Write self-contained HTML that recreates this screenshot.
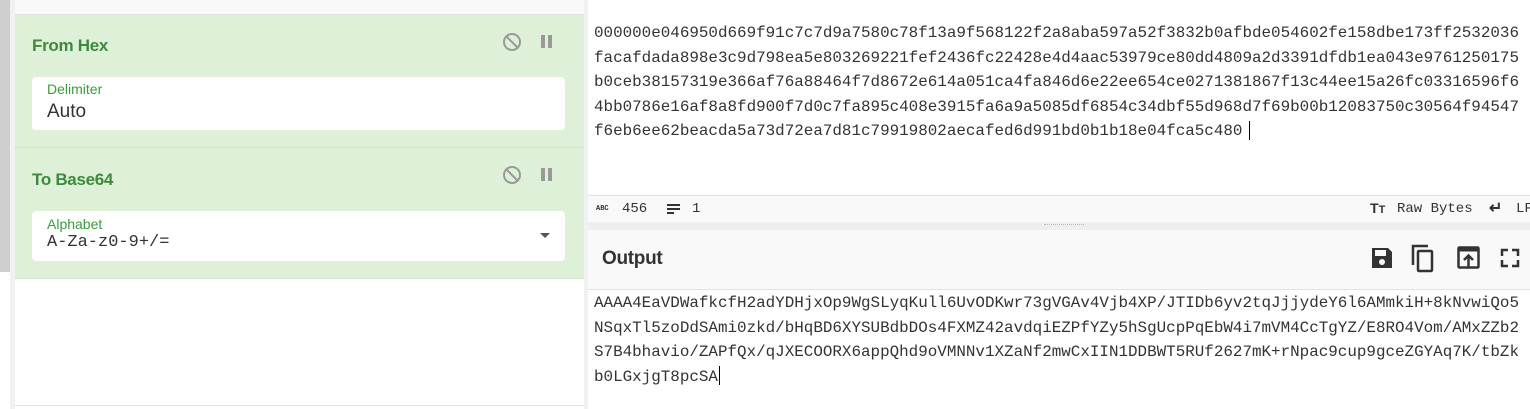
<!DOCTYPE html>
<html><head><meta charset="utf-8"><style>
*{margin:0;padding:0;box-sizing:border-box}
body{width:1530px;height:409px;overflow:hidden;background:#fff;position:relative;font-family:"Liberation Sans",sans-serif}
.abs{position:absolute}
.mono{font-family:"Liberation Mono",monospace}
.title{font-weight:bold;color:#3d8a3d;font-size:17px;letter-spacing:-0.3px}
.box{background:#fff;border-radius:4px}
.lbl{color:#3d9a3d;font-size:14px}
.txt{white-space:pre;font-size:15.9px;color:#333;line-height:24.5px}
</style></head><body>
<div class="abs" style="left:0;top:0;width:10px;height:272px;background:#cfcfcf"></div>
<div class="abs" style="left:10px;top:0;width:5px;height:409px;background:#f1f1f1"></div>
<div class="abs" style="left:15px;top:0;width:569px;height:15px;background:#f9f9f9;border-bottom:1px solid #e2e2e2"></div>
<div class="abs" style="left:15px;top:15px;width:569px;height:133px;background:#dff0d8;border-bottom:1px solid #cfe5c6"></div>
<div class="abs title" style="left:32px;top:36px">From Hex</div>
<svg class="abs" style="left:502px;top:32px" width="20" height="20" viewBox="0 0 20 20"><circle cx="10" cy="10" r="8" fill="none" stroke="#999" stroke-width="2"/><line x1="4.5" y1="4.5" x2="15.5" y2="15.5" stroke="#999" stroke-width="2"/></svg>
<div class="abs" style="left:541px;top:35px;width:4px;height:13px;background:#999"></div>
<div class="abs" style="left:548px;top:35px;width:4px;height:13px;background:#999"></div>
<div class="abs box" style="left:32px;top:77px;width:533px;height:53px"></div>
<div class="abs lbl" style="left:47px;top:81px">Delimiter</div>
<div class="abs" style="left:47px;top:101px;font-size:19px;color:#333">Auto</div>
<div class="abs" style="left:15px;top:148px;width:569px;height:131px;background:#dff0d8;border-bottom:1px solid #cfe5c6"></div>
<div class="abs title" style="left:32px;top:170px">To Base64</div>
<svg class="abs" style="left:502px;top:165px" width="20" height="20" viewBox="0 0 20 20"><circle cx="10" cy="10" r="8" fill="none" stroke="#999" stroke-width="2"/><line x1="4.5" y1="4.5" x2="15.5" y2="15.5" stroke="#999" stroke-width="2"/></svg>
<div class="abs" style="left:541px;top:168px;width:4px;height:13px;background:#999"></div>
<div class="abs" style="left:548px;top:168px;width:4px;height:13px;background:#999"></div>
<div class="abs box" style="left:32px;top:211px;width:533px;height:50px"></div>
<div class="abs lbl" style="left:47px;top:216px">Alphabet</div>
<div class="abs mono" style="left:47px;top:233px;font-size:17px;color:#333">A-Za-z0-9+/=</div>
<div class="abs" style="left:540px;top:233px;width:0;height:0;border-left:5px solid transparent;border-right:5px solid transparent;border-top:5px solid #555"></div>
<div class="abs" style="left:15px;top:405px;width:569px;height:1px;background:#e2e2e2"></div>
<div class="abs" style="left:584px;top:0;width:4px;height:409px;background:#f1f1f1"></div>
<div class="abs mono txt" style="left:594px;top:21px">000000e046950d669f91c7c7d9a7580c78f13a9f568122f2a8aba597a52f3832b0afbde054602fe158dbe173ff2532036
facafdada898e3c9d798ea5e803269221fef2436fc22428e4d4aac53979ce80dd4809a2d3391dfdb1ea043e9761250175
b0ceb38157319e366af76a88464f7d8672e614a051ca4fa846d6e22ee654ce0271381867f13c44ee15a26fc03316596f6
4bb0786e16af8a8fd900f7d0c7fa895c408e3915fa6a9a5085df6854c34dbf55d968d7f69b00b12083750c30564f94547
f6eb6ee62beacda5a73d72ea7d81c79919802aecafed6d991bd0b1b18e04fca5c480</div>
<div class="abs" style="left:1249px;top:121px;width:1px;height:19px;background:#000"></div>
<div class="abs" style="left:588px;top:195px;width:942px;height:27px;background:#f9f9f9;border-top:1px solid #e2e2e2"></div>
<div class="abs mono" style="left:596px;top:205px;font-size:7px;font-weight:bold;color:#333">ABC</div>
<div class="abs mono" style="left:622px;top:201px;font-size:14px;color:#333">456</div>
<div class="abs" style="left:667px;top:204px;width:13px;height:2px;background:#333;box-shadow:0 4px 0 #333"></div>
<div class="abs" style="left:667px;top:212px;width:7px;height:2px;background:#333"></div>
<div class="abs mono" style="left:692px;top:201px;font-size:14px;color:#333">1</div>
<div class="abs" style="left:1370px;top:200px;font-size:14px;font-weight:bold;color:#333">T<span style="font-size:11px">T</span></div>
<div class="abs mono" style="left:1397px;top:201px;font-size:14px;color:#333">Raw Bytes</div>
<div class="abs" style="left:1489px;top:198px;font-size:16px;font-weight:bold;color:#333">↵</div>
<div class="abs mono" style="left:1516px;top:201px;font-size:14px;color:#333">LF</div>
<div class="abs" style="left:588px;top:222px;width:942px;height:8px;background:#eee"></div>
<div class="abs" style="left:1044px;top:224px;width:40px;height:2px;border-top:1px dotted #bbb"></div>
<div class="abs" style="left:588px;top:230px;width:942px;height:60px;background:#f9f9f9;border-bottom:1px solid #e2e2e2"></div>
<div class="abs" style="left:602px;top:248px;font-size:19px;font-weight:bold;color:#333;letter-spacing:-0.3px">Output</div>
<svg class="abs" style="left:1371px;top:246px" width="22" height="24" viewBox="0 0 22 24"><path d="M1 2h16l4 4v16H1z" fill="#333"/><rect x="4" y="4" width="11" height="6" fill="#f9f9f9"/><circle cx="11" cy="16" r="3" fill="#f9f9f9"/></svg>
<svg class="abs" style="left:1411px;top:243px" width="26" height="30" viewBox="0 0 26 30"><path d="M2 22V3h15" fill="none" stroke="#333" stroke-width="2.5"/><rect x="7" y="8" width="14" height="20" rx="1" fill="none" stroke="#333" stroke-width="2.5"/></svg>
<svg class="abs" style="left:1457px;top:246px" width="23" height="24" viewBox="0 0 23 24"><rect x="1.5" y="1.5" width="20" height="20" rx="1" fill="none" stroke="#333" stroke-width="2.5"/><rect x="1.5" y="1.5" width="20" height="4" fill="#333"/><path d="M11.5 21V10M7 14l4.5-4.5L16 14" fill="none" stroke="#333" stroke-width="2.5"/></svg>
<svg class="abs" style="left:1500px;top:248px" width="20" height="20" viewBox="0 0 20 20"><path d="M2 8V2h6M12 2h6v6M18 12v6h-6M8 18H2v-6" fill="none" stroke="#333" stroke-width="2.5"/></svg>
<div class="abs mono txt" style="left:594px;top:291px">AAAA4EaVDWafkcfH2adYDHjxOp9WgSLyqKull6UvODKwr73gVGAv4Vjb4XP/JTIDb6yv2tqJjjydeY6l6AMmkiH+8kNvwiQo5
NSqxTl5zoDdSAmi0zkd/bHqBD6XYSUBdbDOs4FXMZ42avdqiEZPfYZy5hSgUcpPqEbW4i7mVM4CcTgYZ/E8RO4Vom/AMxZZb2
S7B4bhavio/ZAPfQx/qJXECOORX6appQhd9oVMNNv1XZaNf2mwCxIIN1DDBWT5RUf2627mK+rNpac9cup9gceZGYAq7K/tbZk
b0LGxjgT8pcSA</div>
<div class="abs" style="left:719px;top:366px;width:1px;height:19px;background:#000"></div>
</body></html>
